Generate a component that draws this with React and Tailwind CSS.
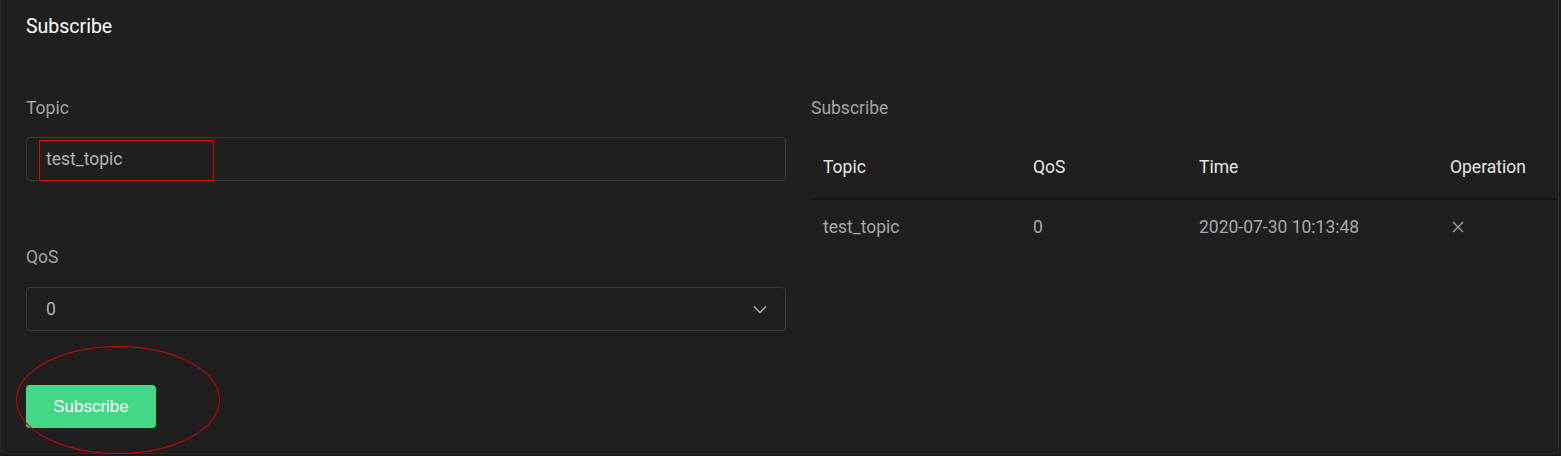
import React from 'react';

const rows = [{ topic: 'test_topic', qos: 0, time: '2020-07-30 10:13:48' }];

const App = () => {
  return (
    <div className="w-[1561px] h-[456px] bg-[#1c1b1c] overflow-hidden" style={{ fontFamily: 'Roboto, "Liberation Sans", sans-serif' }}>
      <div className="relative w-[1559px] h-[454px] bg-[#201f20] border-l border-b border-r border-[#2b2a2b] rounded-b-[4px] pl-[25px]">
        {/* title */}
        <div className="pt-[15px] h-[38px] text-[19.5px] leading-[24px] text-white">Subscribe</div>

        <div className="flex mt-[58px]">
          {/* form */}
          <div className="w-[760px] flex flex-col">
            <label className="text-[17.5px] leading-[24px] text-[#a3a3a3]">Topic</label>
            <div className="relative mt-[17px] h-[44px] rounded-[4px] border border-[#3a393a] flex items-center pl-[19px] text-[17.5px] text-[#b3b3b3]">
              test_topic
              <div className="absolute left-[12px] top-[2px] w-[175px] h-[41px] border border-[#e00000]"></div>
            </div>

            <label className="mt-[64px] text-[17.5px] leading-[24px] text-[#a3a3a3]">QoS</label>
            <div className="mt-[18px] h-[44px] rounded-[4px] border border-[#3a393a] flex items-center justify-between pl-[19px] pr-[18px] text-[17.5px] text-[#b3b3b3]">
              <span>0</span>
              <svg width="14" height="9" viewBox="0 0 14 9" fill="none" stroke="#b8b8b8" strokeWidth="1.3">
                <path d="M1 1.5 L7 7.5 L13 1.5" />
              </svg>
            </div>

            <div className="relative mt-[54px]">
              <button className="w-[130px] h-[43px] rounded-[4px] bg-[#42d885] text-white text-[17px]" style={{ fontFamily: '"Liberation Sans", Arial, sans-serif' }}>
                Subscribe
              </button>
              <div className="absolute left-[-10px] top-[-39px] w-[204px] h-[108px] rounded-[50%] border border-[#d00000]"></div>
            </div>
          </div>

          {/* list */}
          <div className="ml-[25px] flex-1 flex flex-col">
            <div className="text-[17.5px] leading-[24px] text-[#a3a3a3]">Subscribe</div>
            <div className="mt-[17px]">
              <div className="flex h-[63px] pt-[18px] border-b-2 border-[#161516] text-[17.5px] leading-[24px] text-[#e6e6e6]">
                <div className="w-[222px] pl-[12px]">Topic</div>
                <div className="w-[166px]">QoS</div>
                <div className="w-[251px]">Time</div>
                <div className="flex-1">Operation</div>
              </div>
              {rows.map((r, i) => (
                <div key={i} className="flex h-[52px] pt-[15px] text-[17.5px] leading-[24px] text-[#a6a8ab]">
                  <div className="w-[222px] pl-[12px]">{r.topic}</div>
                  <div className="w-[166px]">{r.qos}</div>
                  <div className="w-[251px]">{r.time}</div>
                  <div className="flex-1 flex items-center pl-[2px] h-[24px]">
                    <svg width="12" height="12" viewBox="0 0 12 12" stroke="#a6a6a6" strokeWidth="1.2">
                      <path d="M1 1 L11 11 M11 1 L1 11" />
                    </svg>
                  </div>
                </div>
              ))}
            </div>
          </div>
        </div>
      </div>
    </div>
  );
};

export default App;
